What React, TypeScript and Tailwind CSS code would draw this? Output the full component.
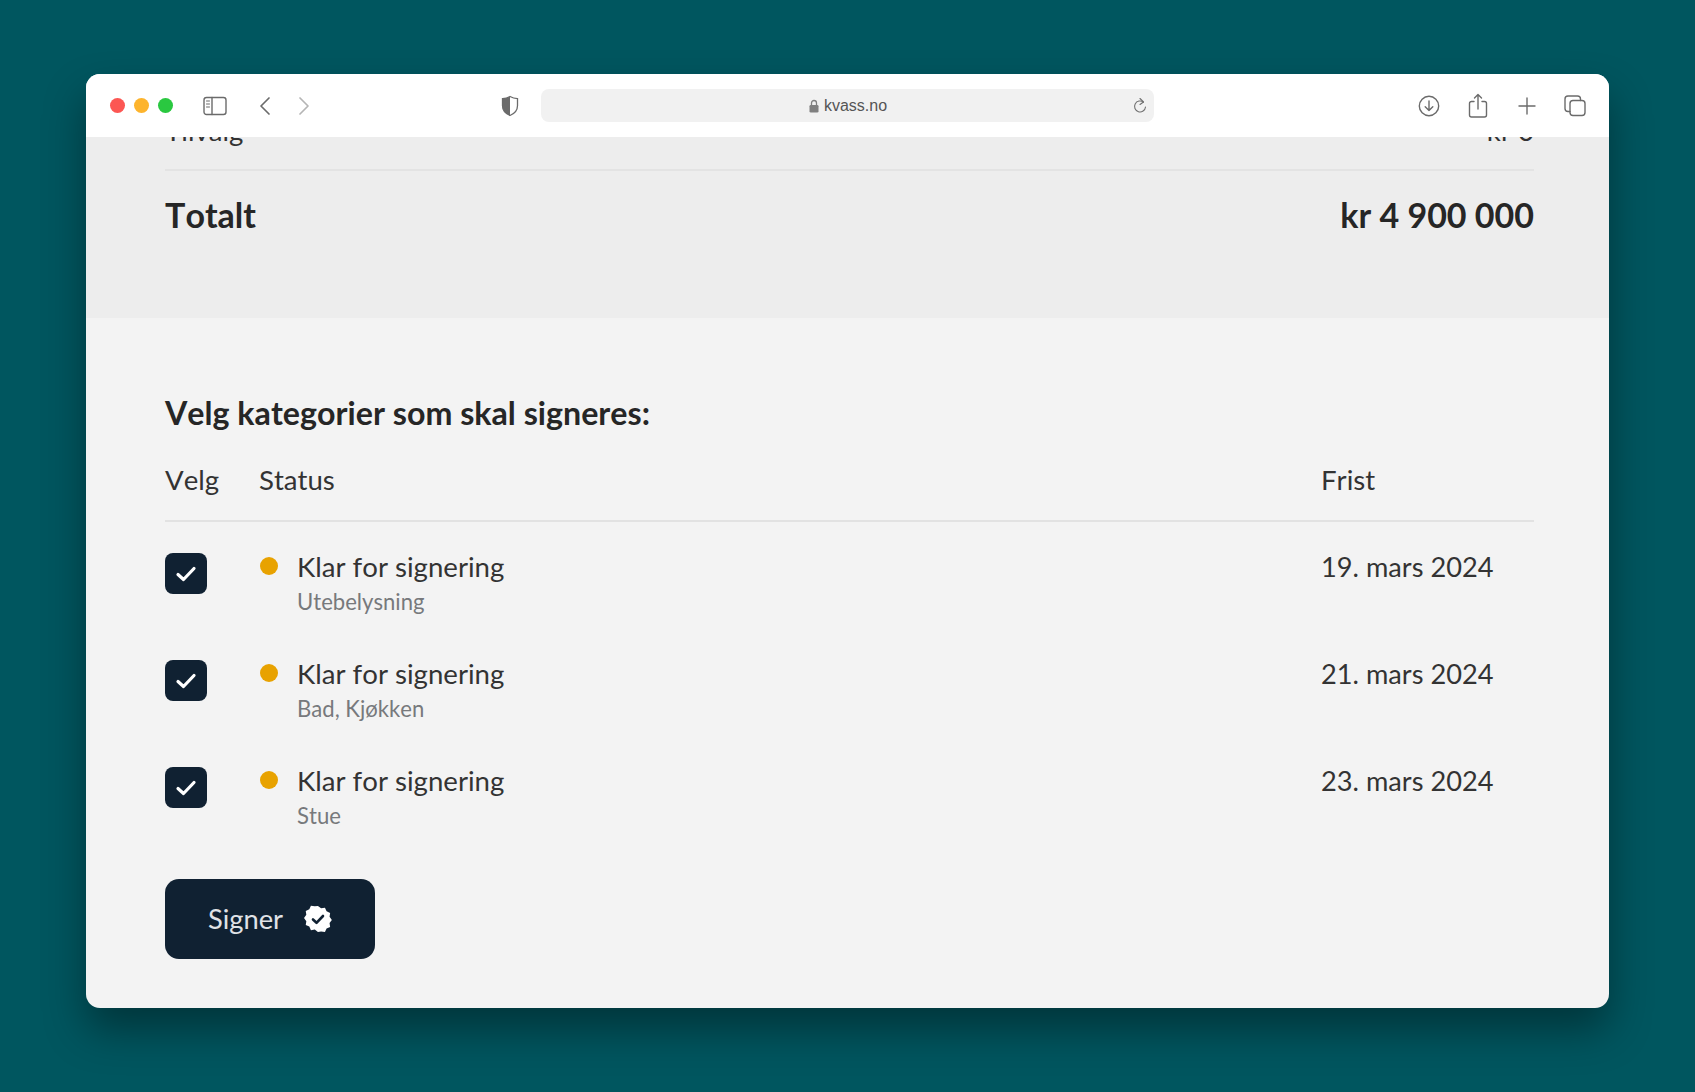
import React from 'react';

const rows = [
  { sub: 'Utebelysning', date: '19. mars 2024' },
  { sub: 'Bad, Kjøkken', date: '21. mars 2024' },
  { sub: 'Stue', date: '23. mars 2024' },
];

function ToolIcon({ w, children }: { w: number; children: React.ReactNode }) {
  return (
    <svg width={w} height={24} viewBox={`0 0 ${w} 24`} fill="none" stroke="#6b6b6b" strokeWidth="1.4" strokeLinecap="round" strokeLinejoin="round" className="shrink-0 block">
      {children}
    </svg>
  );
}

function Toolbar() {
  return (
    <div className="h-[63px] bg-white flex items-center pl-[24px] shrink-0">
      <div className="flex items-center gap-[9px]">
        <span className="w-[15px] h-[15px] rounded-full bg-[#fc5753]" />
        <span className="w-[15px] h-[15px] rounded-full bg-[#fdb42d]" />
        <span className="w-[15px] h-[15px] rounded-full bg-[#2ac840]" />
      </div>
      <div className="ml-[30px]">
        <ToolIcon w={24}>
          <rect x="1" y="3.500" width="22" height="17" rx="2.500" />
          <path d="M9 3.500v17" />
          <path d="M3.500 7h3M3.500 10h3M3.500 13h3" strokeWidth="1" />
        </ToolIcon>
      </div>
      <div className="ml-[32px]">
        <ToolIcon w={12}>
          <path d="M10 4 2 12l8 8" strokeWidth="1.700" />
        </ToolIcon>
      </div>
      <div className="ml-[27px]">
        <svg width={12} height={24} viewBox="0 0 12 24" fill="none" stroke="#b5b5b5" strokeWidth="1.700" strokeLinecap="round" strokeLinejoin="round" className="block">
          <path d="m2 4 8 8-8 8" />
        </svg>
      </div>
      <div className="ml-[191px]">
        <svg width={18} height={22} viewBox="0 0 18 22" className="block">
          <path d="M9 1.500c2.500 1.400 4.800 2 7.500 2.200v7c0 4.600-3 7.800-7.500 9.800-4.500-2-7.500-5.200-7.500-9.800v-7C4.200 3.500 6.500 2.900 9 1.500Z" fill="#fff" stroke="#6b6b6b" strokeWidth="1.300" />
          <path d="M9 1.500c-2.500 1.400-4.800 2-7.500 2.200v7c0 4.600 3 7.800 7.500 9.800Z" fill="#6b6b6b" />
        </svg>
      </div>
      <div className="ml-[22px] w-[613px] h-[33px] rounded-[8px] bg-[#f1f1f1] flex items-center pr-[6px]">
        <div className="flex-1 flex items-center justify-center gap-[5px] pl-[23px]">
          <svg width={10} height={14} viewBox="0 0 10 14">
            <path d="M2.500 6V4a2.500 2.500 0 0 1 5 0v2" fill="none" stroke="#808080" strokeWidth="1.300" />
            <rect x="0.500" y="6" width="9" height="7.500" rx="1.300" fill="#808080" />
          </svg>
          <span className="font-['Liberation_Sans',sans-serif] text-[16px] text-[#555]">kvass.no</span>
        </div>
        <svg width={16} height={18} viewBox="0 0 16 18" fill="none" stroke="#707070" strokeWidth="1.100" strokeLinecap="round" strokeLinejoin="round">
          <path d="M11.500 5.200A5.500 5.500 0 1 0 13.500 10" />
          <path d="M8 1.500 11.500 5 8 7.500" />
        </svg>
      </div>
      <div className="ml-[264px]">
        <ToolIcon w={22}>
          <circle cx="11" cy="12" r="9.700" />
          <path d="M11 7v9.500M7.200 12.800 11 16.500l3.800-3.700" />
        </ToolIcon>
      </div>
      <div className="ml-[28px]">
        <svg width={20} height={25} viewBox="0 0 20 25" fill="none" stroke="#6b6b6b" strokeWidth="1.400" strokeLinecap="round" strokeLinejoin="round" className="block">
          <path d="M6 8.500H3.500a2 2 0 0 0-2 2V22a2 2 0 0 0 2 2h13a2 2 0 0 0 2-2V10.500a2 2 0 0 0-2-2H14" />
          <path d="M10 16V1.500M6.500 5 10 1.500 13.500 5" />
        </svg>
      </div>
      <div className="ml-[30px]">
        <ToolIcon w={18}>
          <path d="M9 4v16M1 12h16" />
        </ToolIcon>
      </div>
      <div className="ml-[28px]">
        <ToolIcon w={22}>
          <rect x="6" y="6.500" width="15" height="15" rx="3" />
          <path d="M6 17.500H4a3 3 0 0 1-3-3V5a3 3 0 0 1 3-3h9.500a3 3 0 0 1 3 3v1.500" />
        </ToolIcon>
      </div>
    </div>
  );
}

function Row({ sub, date }: { sub: string; date: string }) {
  return (
    <div className="h-[107px] flex items-start">
      <div className="w-[94px] pt-[31px]">
        <div className="w-[42px] h-[41px] rounded-[8px] bg-[#102132] flex items-center justify-center">
          <svg width={22} height={18} viewBox="0 0 22 18" fill="none" stroke="#fff" strokeWidth="3.200" strokeLinecap="round" strokeLinejoin="round">
            <path d="m3 9.500 5.500 5L19 3.500" />
          </svg>
        </div>
      </div>
      <div className="flex-1 flex items-start pt-[27px]">
        <span className="w-[18px] h-[18px] rounded-full bg-[#e8a200] mt-[8px] ml-[1px] shrink-0" />
        <div className="ml-[19px]">
          <div className="text-[27.600px] leading-[36px] text-[#333]">Klar for signering</div>
          <div className="text-[22.100px] leading-[28px] mt-[3px] text-[#77797c]">{sub}</div>
        </div>
      </div>
      <div className="w-[213px] pt-[27px] text-[27.200px] leading-[36px] text-[#333]">{date}</div>
    </div>
  );
}

export default function App() {
  return (
    <div className="w-full h-[1092px] bg-[#00565f] pt-[74px] pl-[86px] font-['Lato',sans-serif] [font-kerning:none] overflow-hidden">
      <div className="w-[1523px] h-[934px] rounded-[14px] bg-[#f3f3f3] overflow-hidden flex flex-col shadow-[0_22px_42px_rgba(0,0,0,0.38)]">
        <Toolbar />
        <div className="h-[181px] bg-[#ededed] pl-[79px] pr-[75px] overflow-hidden shrink-0">
          <div className="-mt-[24px] h-[58px] border-b-2 border-[#e3e3e3] flex justify-between text-[27.600px] leading-[36px] text-[#333]">
            <span>Tilvalg</span>
            <span>kr 0</span>
          </div>
          <div className="flex justify-between mt-[22px] text-[34px] leading-[44px] font-bold text-[#262626]">
            <span>Totalt</span>
            <span>kr 4 900 000</span>
          </div>
        </div>
        <div className="pl-[79px] pr-[75px] pt-[72px]">
          <h2 className="text-[32.200px] leading-[46px] font-bold text-[#262626]">Velg kategorier som skal signeres:</h2>
          <div className="mt-[27px] h-[59px] border-b-2 border-[#e2e2e2] flex text-[27.600px] leading-[34px] text-[#333]">
            <span className="w-[94px]">Velg</span>
            <span className="flex-1">Status</span>
            <span className="w-[213px]">Frist</span>
          </div>
          {rows.map((r) => (
            <Row key={r.date} sub={r.sub} date={r.date} />
          ))}
          <button className="mt-[36px] w-[210px] h-[80px] rounded-[14px] bg-[#102132] flex items-center justify-center gap-[21px] text-[27.300px] text-[#e0e3e7]">
            <span>Signer</span>
            <svg width={28} height={28} viewBox="0 0 28 28">
              <path
                d="M14 0.500l3.300 2.400 4-.6 1.700 3.700 3.700 1.700-.6 4 2.400 3.300-2.400 3.300.6 4-3.700 1.700-1.700 3.700-4-.6L14 27.500l-3.300-2.400-4 .6L5 22l-3.700-1.700.6-4L-.5 13l2.400-3.300-.6-4L5 4l1.700-3.700 4 .6Z"
                transform="translate(0.500 0.500) scale(0.960)"
                fill="#fff"
              />
              <path d="m9 14.500 3.500 3.300L19 11" fill="none" stroke="#102132" strokeWidth="2.600" strokeLinecap="round" strokeLinejoin="round" />
            </svg>
          </button>
        </div>
      </div>
    </div>
  );
}
